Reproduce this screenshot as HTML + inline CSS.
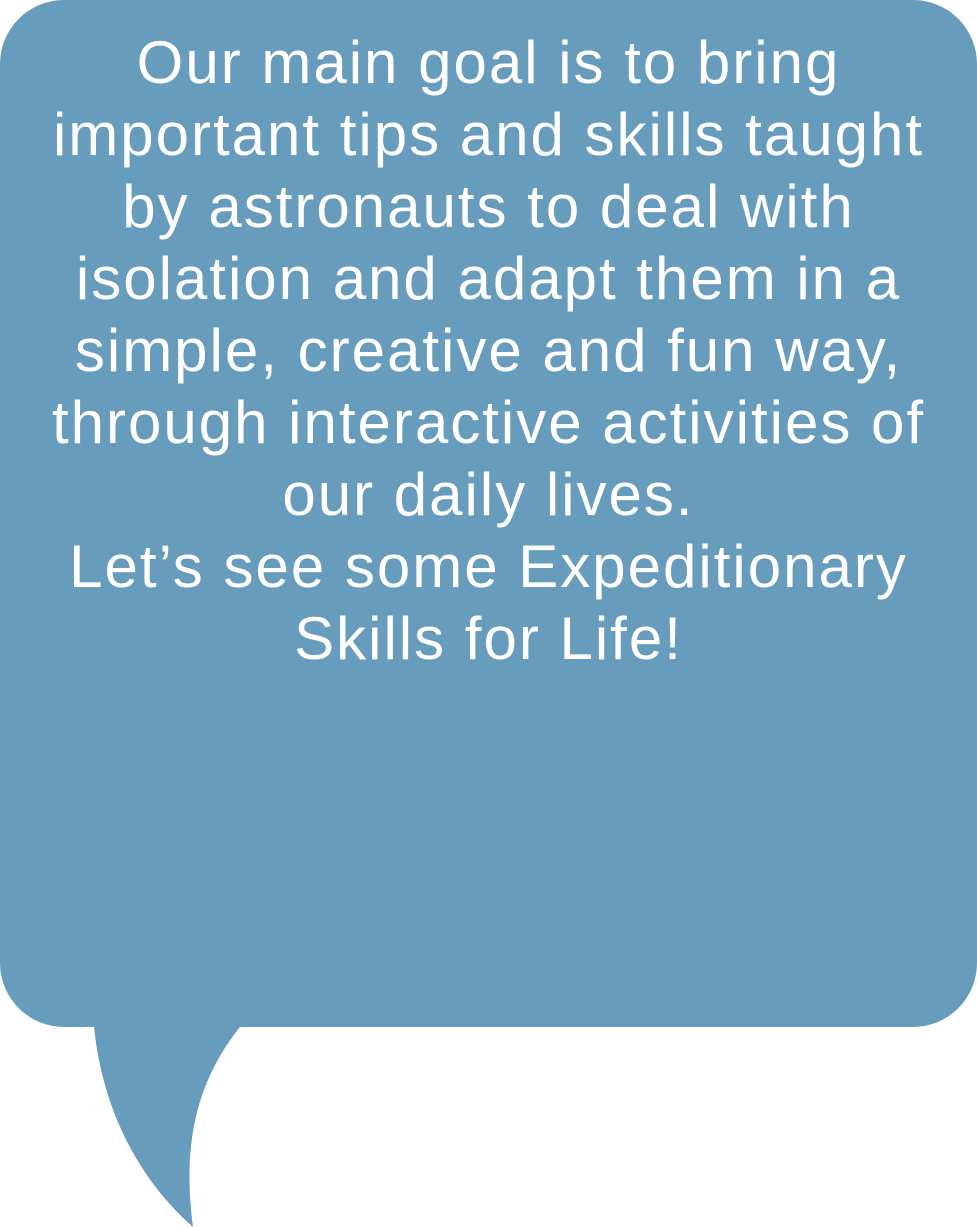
<!DOCTYPE html>
<html><head><meta charset="utf-8"><style>
html,body{margin:0;padding:0;background:#fff;}
body{width:977px;height:1227px;position:relative;overflow:hidden;}
.b{position:absolute;left:0;top:0;width:977px;height:1027px;background:#679cbc;border-radius:64px;}
svg{position:absolute;left:0;top:0;}
.t{position:absolute;left:0;top:27px;width:977px;text-align:center;color:#fff;font-family:"Liberation Sans",sans-serif;font-size:60px;line-height:72px;white-space:nowrap;letter-spacing:2px;}
</style></head><body>
<div class="b"></div>
<svg width="977" height="1227"><path d="M93,1015 C100,1115 145,1185 193,1227 C183,1150 192,1080 250,1015 Z" fill="#679cbc"/></svg>
<div class="t">Our main goal is to bring<br>important tips and skills taught<br>by astronauts to deal with<br>isolation and adapt them in a<br>simple, creative and fun way,<br>through interactive activities of<br>our daily lives.<br>Let’s see some Expeditionary<br>Skills for Life!</div>
</body></html>
